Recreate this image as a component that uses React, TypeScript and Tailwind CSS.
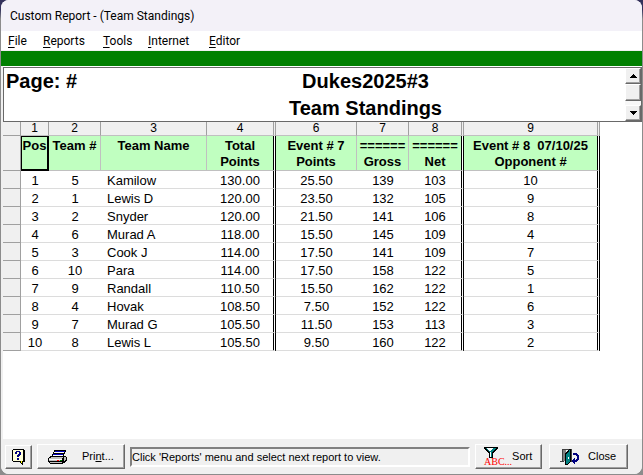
import { clsx } from "clsx";

interface Standing {
  team: number;
  name: string;
  total: string;
  points: string;
  gross: number;
  net: number;
  opponent: number;
}

const menus = [
  { key: "F", rest: "ile", width: "w-[35px]" },
  { key: "R", rest: "eports", width: "w-[60px]" },
  { key: "T", rest: "ools", width: "w-[45px]" },
  { key: "I", rest: "nternet", width: "w-[61px]" },
  { key: "E", rest: "ditor", width: "w-[50px]" },
];

const columns = [
  { id: 1, lines: ["Pos"], double: false },
  { id: 2, lines: ["Team #"], double: false },
  { id: 3, lines: ["Team Name"], double: false },
  { id: 4, lines: ["Total", "Points"], double: true },
  { id: 6, lines: ["Event # 7", "Points"], double: false },
  { id: 7, lines: ["======", "Gross"], double: false },
  { id: 8, lines: ["======", "Net"], double: true },
  { id: 9, lines: ["Event # 8  07/10/25", "Opponent #"], double: true },
];

const standings: Standing[] = [
  { team: 5, name: "Kamilow", total: "130.00", points: "25.50", gross: 139, net: 103, opponent: 10 },
  { team: 1, name: "Lewis D", total: "120.00", points: "23.50", gross: 132, net: 105, opponent: 9 },
  { team: 2, name: "Snyder", total: "120.00", points: "21.50", gross: 141, net: 106, opponent: 8 },
  { team: 6, name: "Murad A", total: "118.00", points: "15.50", gross: 145, net: 109, opponent: 4 },
  { team: 3, name: "Cook J", total: "114.00", points: "17.50", gross: 141, net: 109, opponent: 7 },
  { team: 10, name: "Para", total: "114.00", points: "17.50", gross: 158, net: 122, opponent: 5 },
  { team: 9, name: "Randall", total: "110.50", points: "15.50", gross: 162, net: 122, opponent: 1 },
  { team: 4, name: "Hovak", total: "108.50", points: "7.50", gross: 152, net: 122, opponent: 6 },
  { team: 7, name: "Murad G", total: "105.50", points: "11.50", gross: 153, net: 113, opponent: 3 },
  { team: 8, name: "Lewis L", total: "105.50", points: "9.50", gross: 160, net: 122, opponent: 2 },
];

const raised =
  "border border-t-white border-l-white border-r-[#696969] border-b-[#696969] bg-[#f0f0f0] shadow-[inset_-1px_-1px_0_#a0a0a0]";

const HelpIcon = () => (
  <svg width="16" height="18" viewBox="0 0 16 18" shapeRendering="crispEdges" aria-hidden="true">
    <path d="M2 1h11v1h1v12h-2v3h-1v-1h-1v-1H9v-1H2v-1H1V2h1z" fill="#000" />
    <path d="M2 2h10v11H2z" fill="#ffffd8" />
    <path d="M10 13h1v2h-1z" fill="#ffff00" />
    <path d="M5 3h4v1h1v3H9v1H8v1H6V7h1V6h1V4H6v2H4V4h1zM6 10h2v2H6z" fill="#000080" />
  </svg>
);

const PrinterIcon = () => (
  <svg width="20" height="16" viewBox="0 0 20 16" shapeRendering="crispEdges" aria-hidden="true">
    <path d="M6 1h12v2h-1v2h-1v2h2v1h1v4h-1v1h-1v1h-2v1H2v-1H1v-1H0V9h1V8h1V7h2V5h1V3h1z" fill="#000" />
    <path d="M7 2h10v1H7zM5 5h10v1H5z" fill="#0000c0" />
    <path d="M6 3h10v1H6zM5 6h10v1H5z" fill="#fff" />
    <path d="M3 8h12v1h-1v1H1V9h2z" fill="#c0c0c0" />
    <path d="M1 10h13v1H1z" fill="#fff" />
    <path d="M1 11h13v1H1zM2 13h12v1H2zM16 8h2v3h-1v1h-1z" fill="#c0c0c0" />
    <path d="M9 11h2v1H9z" fill="#ff0000" />
    <path d="M12 11h2v1h-2z" fill="#008000" />
  </svg>
);

const FilterIcon = () => (
  <svg width="14" height="11" viewBox="0 0 14 11" shapeRendering="crispEdges" aria-hidden="true">
    <path d="M0 0h14v2h-1v1h-1v1h-1v1h-1v1H9v5H5V6H4V5H3V4H2V3H1V2H0z" fill="#000" />
    <path d="M2 1h10v1h-1v1h-1v1H9v1H8v5H7V5H5V4H4V3H3V2H2z" fill="#008080" />
    <path d="M3 1h6v1H8v1H7v1H5V3H4V2H3zM6 5h1v5H6z" fill="#fff" />
  </svg>
);

const DoorIcon = () => (
  <svg width="20" height="16" viewBox="0 0 20 16" shapeRendering="crispEdges" aria-hidden="true">
    <path d="M2 0h10v13h-1V1H4v12H0v-1h2z" fill="#404040" />
    <path d="M3 1h3v11H3z" fill="#808080" />
    <path d="M11 0v13h-1v1H9v1H8v1H5V4h1V3h1V2h1V1h1V0z" fill="#000" />
    <path d="M10 1v12H9v1H8v1H6V5h1V4h1V3h1V1z" fill="#008080" />
    <path d="M8 8h1v2H8z" fill="#fff" />
    <path
      d="M13 4h4v1h1v1h1v5h-1v1h-1v1h-2v2h-1v-1h-1v-1h-1v-2h1v-1h1V9h1v2h1v-1h1V7h-1V6h-3z"
      fill="#000080"
    />
  </svg>
);

const ScrollButton = ({ down = false }: { down?: boolean }) => (
  <button
    type="button"
    aria-label={down ? "Scroll down" : "Scroll up"}
    className={clsx("flex h-4 w-4 shrink-0 items-center justify-center", raised)}
  >
    <svg width="7" height="4" viewBox="0 0 7 4" shapeRendering="crispEdges" aria-hidden="true">
      <path d={down ? "M0 0h7v1H6v1H5v1H4v1H3V3H2V2H1V1H0z" : "M3 0h1v1h1v1h1v1h1v1H0V3h1V2h1V1h1z"} />
    </svg>
  </button>
);

const ReportHeader = () => (
  <div className="flex h-[55px] border border-r-0 border-[#696969] bg-white">
    <div className="grid flex-1 grid-cols-[1fr_auto_1fr] pl-0.5 text-xl leading-[27px] font-bold">
      <span>Page: #</span>
      <h1 className="pl-[100px] text-center">
        Dukes2025#3
        <br />
        Team Standings
      </h1>
    </div>
    <div className="flex w-[17px] flex-col border-r border-[#696969] bg-[#f8f8f8]">
      <ScrollButton />
      <div className={clsx("h-[17px] w-4", raised)} />
      <div className="flex-1" />
      <ScrollButton down />
    </div>
  </div>
);

const cell = "border-b border-b-[#dcdcdc] p-0 pt-0.5 text-center";
const rowHead = "border-r border-b border-[#a0a0a0] bg-[#f0f0f0] p-0";
const doubleLine = "border-r-[3px] border-double border-r-black";

const StandingsTable = () => (
  <table className="w-[597px] table-fixed border-separate border-spacing-0 text-[13px] leading-[15px]">
    <colgroup>
      <col className="w-[18px]" />
      <col className="w-[28px]" />
      <col className="w-[52px]" />
      <col className="w-[106px]" />
      <col className="w-[69px]" />
      <col className="w-[81px]" />
      <col className="w-[52px]" />
      <col className="w-[55px]" />
      <col className="w-[136px]" />
    </colgroup>
    <thead>
      <tr className="h-[14px] bg-[#f0f0f0] text-xs leading-[13px]">
        <td className="border-r border-b border-[#a0a0a0] p-0" />
        {columns.map((col) => (
          <td
            key={col.id}
            className={clsx(
              "border-b border-b-[#c0c0c0] p-0 text-center",
              col.double ? "border-r-[3px] border-double border-r-[#a0a0a0]" : "border-r border-r-[#a0a0a0]",
            )}
          >
            {col.id}
          </td>
        ))}
      </tr>
      <tr className="h-[35px] leading-4">
        <td className={rowHead} />
        {columns.map((col) => (
          <th
            key={col.id}
            scope="col"
            className={clsx(
              "bg-[#c0ffc0] bg-clip-padding p-0 text-center align-top font-bold whitespace-pre",
              col.id === 1 && "border border-r-2 border-b-2 border-black pt-px",
              col.id !== 1 && "border-b border-b-[#c0c0c0] pt-0.5",
              col.double && doubleLine,
              col.id !== 1 && !col.double && "border-r border-r-[#c0c0c0]",
            )}
          >
            {col.lines.join("\n")}
          </th>
        ))}
      </tr>
    </thead>
    <tbody>
      {standings.map((row, index) => (
        <tr key={row.team} className="h-[18px]">
          <td className={rowHead} />
          <td className={cell}>{index + 1}</td>
          <td className={cell}>{row.team}</td>
          <td className="border-b border-b-[#dcdcdc] p-0 pt-0.5 pl-1.5 text-left">{row.name}</td>
          <td className={clsx(cell, doubleLine)}>{row.total}</td>
          <td className={cell}>{row.points}</td>
          <td className={cell}>{row.gross}</td>
          <td className={clsx(cell, doubleLine)}>{row.net}</td>
          <td className={clsx(cell, doubleLine)}>{row.opponent}</td>
        </tr>
      ))}
    </tbody>
  </table>
);

const Footer = () => (
  <footer className="flex h-[35px] items-center bg-[#f0f0f0] pr-3.5 pl-0.5 text-[11px]">
    <button type="button" aria-label="Help" className={clsx("flex h-6 w-[27px] items-center justify-center", raised)}>
      <HelpIcon />
    </button>
    <button type="button" className={clsx("ml-[5px] flex h-[25px] w-[88px] items-center gap-3.5 pl-2.5", raised)}>
      <PrinterIcon />
      <span>
        Pri<u>n</u>t...
      </span>
    </button>
    <div
      role="status"
      className="mx-[5px] h-5 flex-1 truncate border-2 border-t-[#808080] border-r-white border-b-white border-l-[#808080] leading-4"
    >
      Click 'Reports' menu and select next report to view.
    </div>
    <button type="button" className={clsx("flex h-[25px] w-[67px] items-center pl-2", raised)}>
      <span className="flex flex-col items-start">
        <FilterIcon />
        <span className="font-['Liberation_Serif',serif] text-[10px] leading-2 text-[#ff0000]">ABC...</span>
      </span>
      <span>Sort</span>
    </button>
    <button type="button" className={clsx("ml-[7px] flex h-[25px] w-[79px] items-center gap-2 pl-2.5", raised)}>
      <DoorIcon />
      <span>Close</span>
    </button>
  </footer>
);

export default function App() {
  return (
    <div className="flex min-h-screen flex-col bg-linear-to-b from-[#34325c] from-2% to-[#8c8c8c] to-4% px-px pb-px font-['Liberation_Sans',Arial,sans-serif] text-black">
      <div className="flex flex-1 flex-col overflow-hidden rounded-lg bg-white">
        <header className="flex h-[31px] items-center bg-[#f3f1f8] pl-[9px] font-['Roboto',sans-serif] text-xs">
          Custom Report - (Team Standings)
        </header>
        <nav className="flex h-5 items-center border-b border-[#f0f0f0] bg-white pl-[7px] font-['Roboto',sans-serif] text-xs">
          {menus.map((menu) => (
            <button key={menu.key} type="button" className={clsx("text-left", menu.width)}>
              <u className="underline-offset-2">{menu.key}</u>
              {menu.rest}
            </button>
          ))}
        </nav>
        <div className="h-[15px] bg-[#008000]" />
        <main className="flex flex-1 flex-col border-l-2 border-[#f0f0f0] pt-px">
          <ReportHeader />
          <StandingsTable />
          <div className="flex-1" />
          <Footer />
        </main>
      </div>
    </div>
  );
}
